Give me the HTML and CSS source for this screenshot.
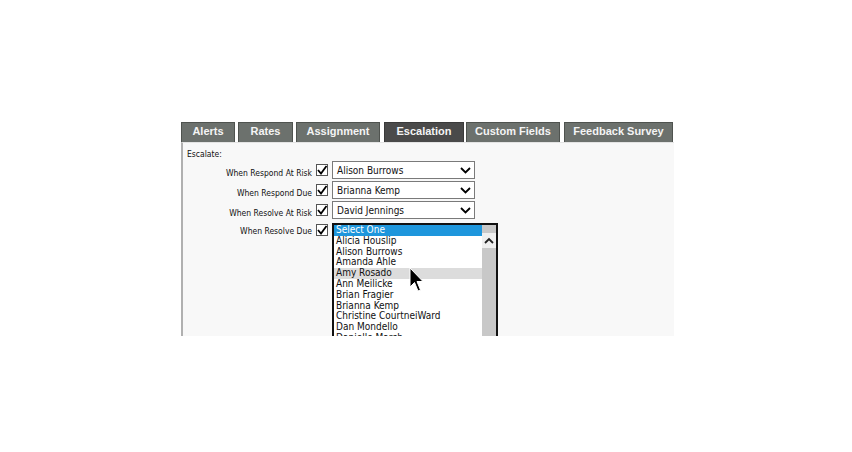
FILE: index.html
```html
<!DOCTYPE html>
<html>
<head>
<meta charset="utf-8">
<title>Escalation</title>
<link rel="stylesheet" href="styles.css">
</head>
<body>
<div class="page">
  <div class="frame">
    <ul class="tabs">
      <li class="tab t1">Alerts</li>
      <li class="tab t2">Rates</li>
      <li class="tab t3">Assignment</li>
      <li class="tab t4 on">Escalation</li>
      <li class="tab t5">Custom Fields</li>
      <li class="tab t6">Feedback Survey</li>
    </ul>
    <div class="panel">
      <div class="title">Escalate:</div>

      <div class="row">
        <span class="lbl">When Respond At Risk</span>
        <span class="chk"><svg width="10" height="10" viewBox="0 0 10 10"><path d="M1 5 L4 8.5 L9.5 1" fill="none" stroke="#000" stroke-width="1.8"/></svg></span>
        <div class="sel"><span>Alison Burrows</span><svg width="11" height="7" viewBox="0 0 11 7"><path d="M1 1 L5.5 5.5 L10 1" fill="none" stroke="#000" stroke-width="1.8"/></svg></div>
      </div>

      <div class="row">
        <span class="lbl">When Respond Due</span>
        <span class="chk"><svg width="10" height="10" viewBox="0 0 10 10"><path d="M1 5 L4 8.5 L9.5 1" fill="none" stroke="#000" stroke-width="1.8"/></svg></span>
        <div class="sel"><span>Brianna Kemp</span><svg width="11" height="7" viewBox="0 0 11 7"><path d="M1 1 L5.5 5.5 L10 1" fill="none" stroke="#000" stroke-width="1.8"/></svg></div>
      </div>

      <div class="row">
        <span class="lbl">When Resolve At Risk</span>
        <span class="chk"><svg width="10" height="10" viewBox="0 0 10 10"><path d="M1 5 L4 8.5 L9.5 1" fill="none" stroke="#000" stroke-width="1.8"/></svg></span>
        <div class="sel"><span>David Jennings</span><svg width="11" height="7" viewBox="0 0 11 7"><path d="M1 1 L5.5 5.5 L10 1" fill="none" stroke="#000" stroke-width="1.8"/></svg></div>
      </div>

      <div class="row open">
        <span class="lbl">When Resolve Due</span>
        <span class="chk"><svg width="10" height="10" viewBox="0 0 10 10"><path d="M1 5 L4 8.5 L9.5 1" fill="none" stroke="#000" stroke-width="1.8"/></svg></span>
        <div class="listbox">
          <ul class="opts">
            <li class="picked">Select One</li>
            <li>Alicia Houslip</li>
            <li>Alison Burrows</li>
            <li>Amanda Ahle</li>
            <li class="hover">Amy Rosado</li>
            <li>Ann Meilicke</li>
            <li>Brian Fragier</li>
            <li>Brianna Kemp</li>
            <li>Christine CourtneiWard</li>
            <li>Dan Mondello</li>
            <li>Danielle Marsh</li>
          </ul>
          <div class="scroll">
            <div class="up"><svg width="10" height="7" viewBox="0 0 10 7"><path d="M1 6 L5 2 L9 6" fill="none" stroke="#222" stroke-width="1.8"/></svg></div>
          </div>
          <svg class="cursor" width="17" height="27" viewBox="0 0 17 27"><path d="M1 1 L1 20 L5.5 15.5 L9 24 L11.5 23 L8 14.5 L14 14.5 Z" fill="#000" stroke="#fff" stroke-width="1"/></svg>
        </div>
      </div>
    </div>
  </div>
</div>
</body>
</html>
```

FILE: styles.css
```css
*{margin:0; padding:0; box-sizing:border-box;}
ul{list-style:none;}
body{background:#fff; font-family:"DejaVu Sans", Verdana, sans-serif;}
.page{padding:122px 0 0 181px;}
.frame{width:493px; height:214px; overflow:hidden;}

.tabs{display:flex; height:20px;}
.tab{height:20px; margin-right:3px; background:#6c716d; border:1px solid #4f534f; border-bottom:none; color:#f4f4f4; font-family:"Liberation Sans", Arial, sans-serif; font-weight:bold; font-size:11px; line-height:17px; text-align:center;}
.tab.on{background:#4a4a4a; border-color:#3a3a3a;}
.t1{width:54px; margin-right:3px;}
.t2{width:55px; margin-right:3px;}
.t3{width:84px; margin-right:4px;}
.t4{width:80px; margin-right:2px;}
.t5{width:94px; margin-right:4px;}
.t6{width:109px; margin-right:0;}

.panel{height:194px; background:#f8f8f8; border-left:2px solid #b0b0b0; border-top:1px solid #e4e4e4; padding:6px 0 0 4px; font-family:"DejaVu Sans Condensed", "DejaVu Sans", sans-serif; color:#111;}
.title{font-size:8.5px; height:11px; line-height:11px;}
.row{display:flex; align-items:center; height:20px;}
.lbl{width:125px; text-align:right; font-size:8.5px; padding-top:5px;}
.chk{width:12px; height:12px; margin-left:4px; border:1px solid #555; background:#fff; display:flex; align-items:center; justify-content:center;}
.sel{width:143px; height:18px; margin-left:4px; border:1px solid #7a7a7a; background:#fff; display:flex; align-items:center; justify-content:space-between; padding:0 3px 0 4px; font-size:10px;}

.row.open{align-items:flex-start; height:auto; margin-top:3px;}
.row.open .lbl{padding-top:3px;}
.row.open .chk{margin-top:1px;}
.listbox{position:relative; width:166px; height:130px; margin-left:4px; border:2px solid #111; background:#fff; display:flex;}
.opts{flex:1; font-size:10px; line-height:10.8px;}
.opts li{padding-left:2px; white-space:nowrap;}
.opts .picked{background:#1e96dc; color:#fff;}
.opts .hover{background:#dcdcdc;}
.scroll{width:14px; background:#c8c8c8;}
.scroll .up{height:15px; margin-top:8px; background:#efefef; display:flex; align-items:center; justify-content:center;}
.cursor{position:absolute; left:75px; top:42px;}
```
